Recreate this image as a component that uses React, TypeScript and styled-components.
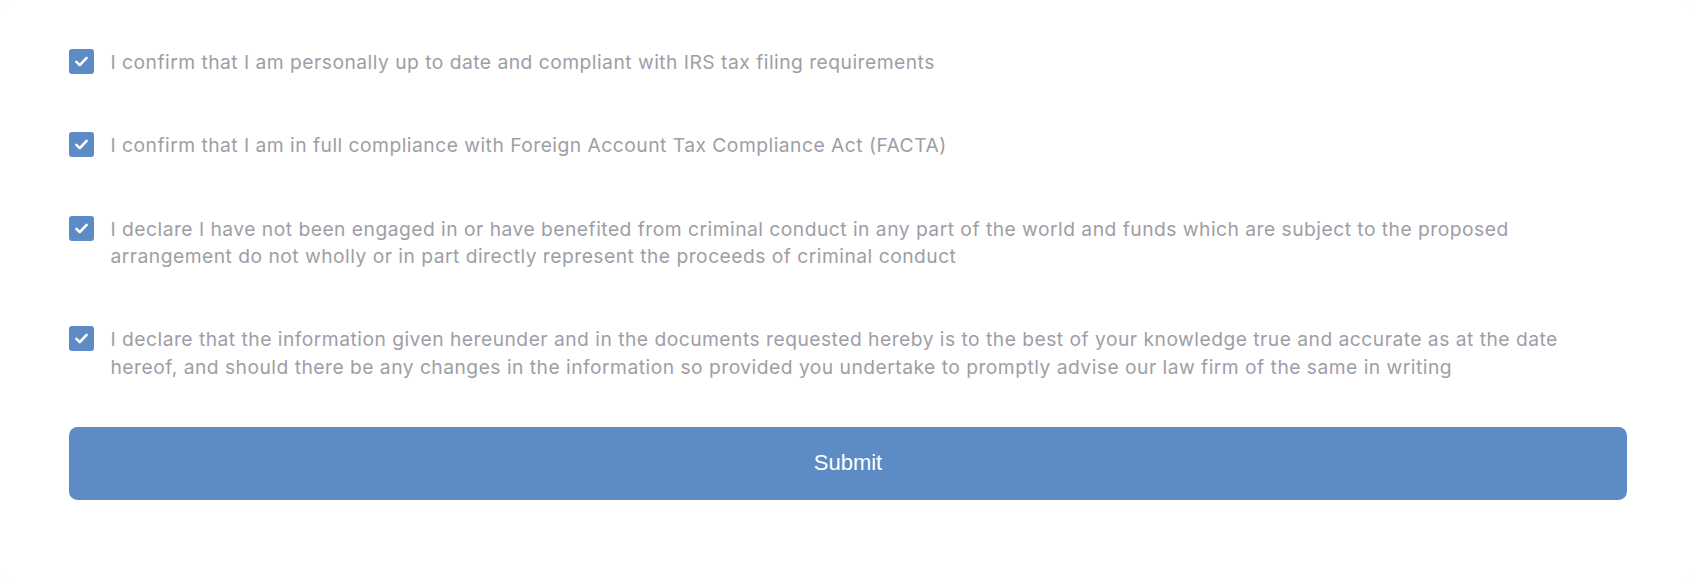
import React from "react";
import styled, { createGlobalStyle } from "styled-components";

const Global = createGlobalStyle`
  html, body { margin: 0; padding: 0; background: #ffffff; }
  * { box-sizing: border-box; }
`;

const Card = styled.div`
  width: 1696px;
  height: 580px;
  background: #ffffff;
  border-radius: 12px;
  box-shadow: 0 0 3px rgba(0, 0, 0, 0.035);
  padding: 49px 69px 0 69px;
  display: flex;
  flex-direction: column;
`;

const List = styled.div`
  display: flex;
  flex-direction: column;
  gap: 55.8px;
`;

const Row = styled.label`
  display: flex;
  align-items: flex-start;
  gap: 16.5px;
`;

const Box = styled.span`
  flex: 0 0 auto;
  width: 25px;
  height: 25px;
  margin-top: 0;
  border-radius: 3px;
  background: #5d8bc6;
  display: flex;
  align-items: center;
  justify-content: center;
`;

const Text = styled.span`
  font-family: Inter, "Noto Sans", sans-serif;
  font-size: 19.25px;
  line-height: 27.5px;
  letter-spacing: 0.48px;
  color: #9e9ea6;
`;

const Button = styled.button`
  margin-top: 45.6px;
  width: 100%;
  height: 73px;
  border: none;
  border-radius: 8.5px;
  background: #5d8bc5;
  color: #ffffff;
  font-family: "Liberation Sans", Arial, sans-serif;
  font-size: 22px;
  cursor: pointer;
`;

const Check = () => (
  <svg width="17" height="17" viewBox="0 0 16 16" fill="none">
    <path d="M3.2 8.4 L6.4 11.4 L12.8 4.6" stroke="#fff" strokeWidth="2.4" strokeLinecap="round" strokeLinejoin="round" />
  </svg>
);

const items: string[][] = [
  ["I confirm that I am personally up to date and compliant with IRS tax filing requirements"],
  ["I confirm that I am in full compliance with Foreign Account Tax Compliance Act (FACTA)"],
  [
    "I declare I have not been engaged in or have benefited from criminal conduct in any part of the world and funds which are subject to the proposed",
    "arrangement do not wholly or in part directly represent the proceeds of criminal conduct",
  ],
  [
    "I declare that the information given hereunder and in the documents requested hereby is to the best of your knowledge true and accurate as at the date",
    "hereof, and should there be any changes in the information so provided you undertake to promptly advise our law firm of the same in writing",
  ],
];

export default function App() {
  return (
    <>
      <Global />
      <Card>
        <List>
          {items.map((lines, i) => (
            <Row key={i}>
              <Box>
                <Check />
              </Box>
              <Text>
                {lines.map((l, j) => (
                  <React.Fragment key={j}>
                    {j > 0 && <br />}
                    {l}
                  </React.Fragment>
                ))}
              </Text>
            </Row>
          ))}
        </List>
        <Button>Submit</Button>
      </Card>
    </>
  );
}
